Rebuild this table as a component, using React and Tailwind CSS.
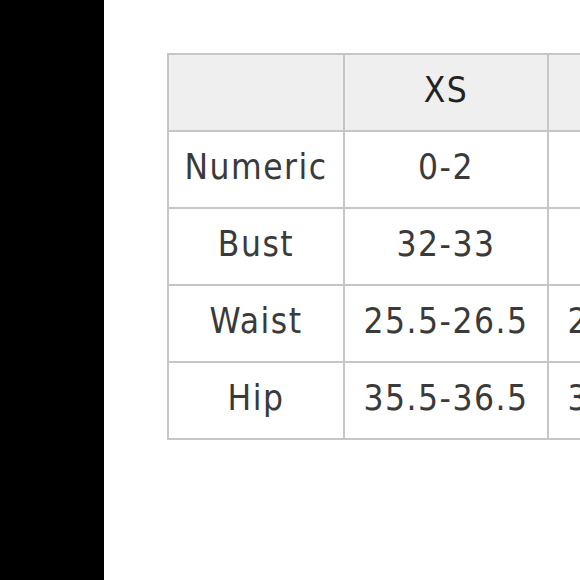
import React from 'react';

const rows = [
  { label: 'Numeric', xs: '0-2', s: '4-6' },
  { label: 'Bust', xs: '32-33', s: '34-35' },
  { label: 'Waist', xs: '25.5-26.5', s: '26.5-27.5' },
  { label: 'Hip', xs: '35.5-36.5', s: '36.5-37.5' },
];

const cell = 'border-2 border-[#c6c6c6] h-[77px] text-center align-middle p-0 pb-[5px] whitespace-nowrap';

const App = () => {
  return (
    <div className="w-[580px] h-[580px] overflow-hidden flex bg-white font-['DejaVu_Sans_Condensed','DejaVu_Sans',sans-serif]">
      <div className="w-[104px] h-full bg-black shrink-0" />
      <div className="flex-1 pl-[63px] pt-[53px] overflow-hidden">
        <table className="table-fixed border-collapse w-[584px] text-[35px] tracking-[1.5px] text-[#3a3a3a]">
          <colgroup>
            <col className="w-[176px]" />
            <col className="w-[204px]" />
            <col className="w-[204px]" />
          </colgroup>
          <thead>
            <tr className="bg-[#efefef]">
              <th className={cell}></th>
              <th className={`${cell} font-normal text-[#222222]`}>XS</th>
              <th className={`${cell} font-normal text-[#222222]`}>S</th>
            </tr>
          </thead>
          <tbody>
            {rows.map((row) => (
              <tr key={row.label}>
                <td className={cell}>{row.label}</td>
                <td className={cell}>{row.xs}</td>
                <td className={cell}>{row.s}</td>
              </tr>
            ))}
          </tbody>
        </table>
      </div>
    </div>
  );
};

export default App;
